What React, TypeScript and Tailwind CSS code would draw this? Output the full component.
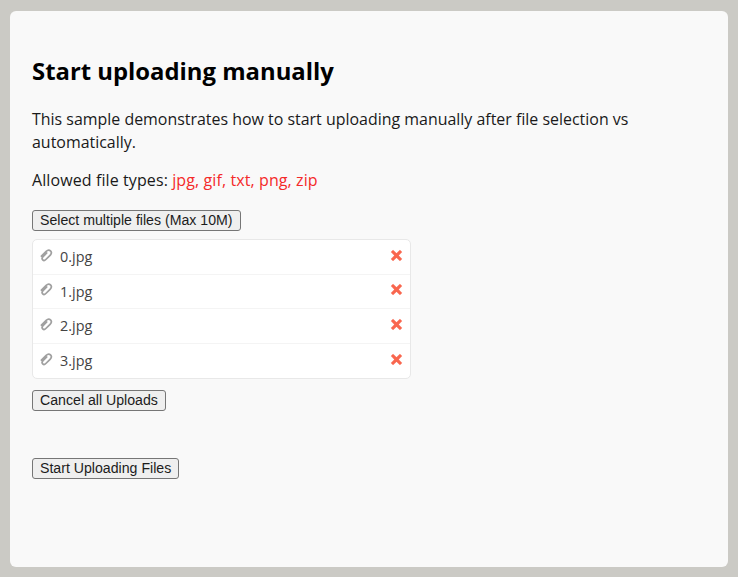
import React from 'react';

const files = ['0.jpg', '1.jpg', '2.jpg', '3.jpg'];

const FileButton: React.FC<{ label: string }> = ({ label }) => (
  <button
    type="button"
    className="block h-[21px] px-[7px] border border-[#767676] rounded-[3px] bg-[#efefef] text-[14.15px] leading-[15px] text-[#1c1c1c] font-['Liberation_Sans',sans-serif]"
  >
    {label}
  </button>
);

const Clip = () => (
  <svg width="13" height="13" viewBox="0 0 12 12" fill="none" stroke="#a0a0a0" strokeWidth="1.6" strokeLinecap="round" className="mt-[-3px]">
    <path d="M1.3 6.6 5.7 2.2c1.3-1.3 3-1.4 4-.4s.9 2.7-.4 4L5.4 9.7c-.9.9-2.2 1-2.9.3s-.6-2 .3-2.9l3.4-3.4" />
  </svg>
);

const Remove = () => (
  <svg width="13" height="13" viewBox="0 0 12 12" className="mt-[-3px]">
    <path d="M2.8.9 6 4 9.2.9 11.1 2.8 8 6 11.1 9.2 9.2 11.1 6 8 2.8 11.1.9 9.2 4 6 .9 2.8Z" fill="#f9664e" stroke="#f9664e" strokeOpacity="0.35" strokeWidth="0.6" />
  </svg>
);

const App: React.FC = () => {
  return (
    <div className="h-[577px] bg-[#cbcac5] pt-[11px] px-[10px] pb-[10px] font-['Open_Sans',sans-serif]">
      <div className="h-full rounded-[6px] bg-[#f9f9f9] pl-[22px] pr-[21px] pt-[44px]">
        <h1 className="text-[23.85px] leading-[33px] font-bold text-black">Start uploading manually</h1>
        <p className="mt-[20px] text-[15.95px] leading-[23px] text-[#1a1a1a]">
          This sample demonstrates how to start uploading manually after file selection vs automatically.
        </p>
        <p className="mt-[15px] text-[16px] leading-[23px] tracking-[0.1px] text-[#1a1a1a]">
          Allowed file types: <span className="text-[#f42a2a]">jpg, gif, txt, png, zip</span>
        </p>
        <div className="mt-[18px]">
          <FileButton label="Select multiple files (Max 10M)" />
        </div>
        <ul className="mt-[8px] w-[379px] rounded-[5px] border border-[#e8e8e8] bg-white">
          {files.map((name, i) => (
            <li
              key={name}
              className={`flex items-center h-[34.5px] pl-[7px] pr-[7px] ${i < files.length - 1 ? 'border-b border-[#f4f4f4]' : ''}`}
            >
              <Clip />
              <span className="ml-[7px] flex-1 pt-px text-[14.4px] text-[#444]">{name}</span>
              <Remove />
            </li>
          ))}
        </ul>
        <div className="mt-[11px]">
          <FileButton label="Cancel all Uploads" />
        </div>
        <div className="mt-[47px]">
          <FileButton label="Start Uploading Files" />
        </div>
      </div>
    </div>
  );
};

export default App;
